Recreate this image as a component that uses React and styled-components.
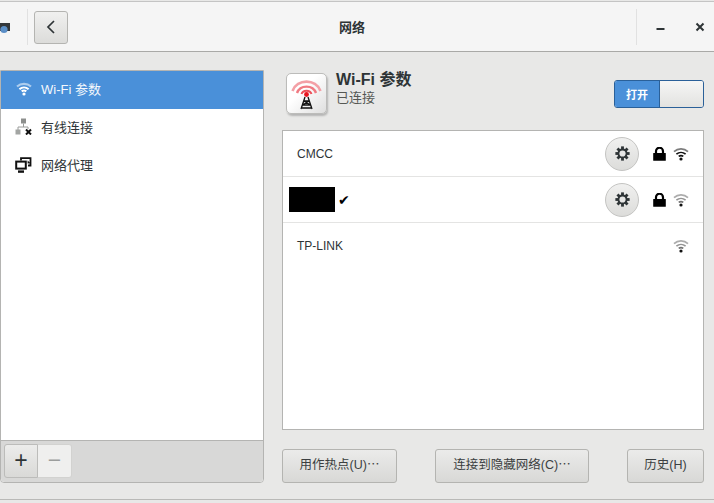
import React from 'react'
import styled, { createGlobalStyle } from 'styled-components'

const GlobalStyle = createGlobalStyle`
  html, body {
    margin: 0;
    padding: 0;
    background: #e8e8e7;
  }
  body {
    font-family: 'Liberation Sans', 'Noto Sans CJK SC', sans-serif;
    color: #2e3436;
  }
`

const Window = styled.div`
  width: 714px;
  height: 503px;
  box-sizing: border-box;
  display: flex;
  flex-direction: column;
  overflow: hidden;
  padding-top: 1px;
  background: #e8e8e7;
`
const TitleBar = styled.header`
  height: 51px;
  box-sizing: border-box;
  flex: none;
  display: flex;
  align-items: center;
  background: #f5f5f5;
  border-top: 1px solid #c4c4c4;
  border-bottom: 1px solid #a9a9a7;
`
const AppIconSlot = styled.div`
  width: 28px;
  height: 36px;
  box-sizing: border-box;
  flex: none;
  display: flex;
  align-items: center;
  padding-top: 4px;
  overflow: hidden;
  border-right: 1px solid #e1e1e1;
`
const BackButton = styled.button`
  margin: 1px 0 0 6px;
  width: 34px;
  height: 33px;
  flex: none;
  padding: 0;
  display: flex;
  align-items: center;
  justify-content: center;
  border: 1px solid #b4b4b1;
  border-radius: 3px;
  background: linear-gradient(#f0f0ef, #dcdcda);
`
const Title = styled.h1`
  flex: 1;
  margin: 0;
  text-align: center;
  font-size: 13px;
  font-weight: 700;
  color: #2e3436;
`
const WindowControls = styled.div`
  width: 78px;
  height: 36px;
  box-sizing: border-box;
  flex: none;
  display: flex;
  align-items: center;
  padding-left: 19px;
  gap: 30px;
  border-left: 1px solid #e1e1e1;
`
const Content = styled.div`
  flex: 1;
  display: flex;
  align-items: stretch;
  gap: 18px;
  padding: 18px 10px 18px 0;
  min-height: 0;
`
const Sidebar = styled.aside`
  width: 264px;
  height: 413px;
  box-sizing: border-box;
  flex: none;
  display: flex;
  flex-direction: column;
  background: #fff;
  border: 1px solid #b4b4b2;
  border-radius: 0 0 4px 4px;
`
const SideList = styled.div`
  flex: 1;
`
const SideRow = styled.div`
  height: 38px;
  box-sizing: border-box;
  display: flex;
  align-items: center;
  padding: 0 0 3px 14px;
  gap: 9px;
  font-size: 13px;
  background: ${p => (p.$active ? '#4a90d9' : 'transparent')};
  color: ${p => (p.$active ? '#f4f8fc' : '#2e3436')};
`
const SideIcon = styled.span`
  width: 17px;
  height: 17px;
  display: flex;
  align-items: center;
  justify-content: center;
  flex: none;
`
const SideFooter = styled.div`
  height: 42px;
  box-sizing: border-box;
  flex: none;
  display: flex;
  padding: 3px;
  background: #d8d8d7;
  border-top: 1px solid #b4b4b2;
  border-radius: 0 0 4px 4px;
`
const FooterButton = styled.button`
  height: 34px;
  width: 34px;
  padding: 0 0 2px;
  border: 1px solid ${p => (p.$dim ? '#d2d2d0' : '#bcbcba')};
  border-left-width: ${p => (p.$dim ? 0 : 1)}px;
  border-radius: ${p => (p.$dim ? '0 3px 3px 0' : '3px 0 0 3px')};
  background: ${p => (p.$dim ? '#efefee' : 'linear-gradient(#ececeb, #d9d9d7)')};
  color: ${p => (p.$dim ? '#9b9d9c' : '#2e3436')};
  font-family: 'Liberation Sans', sans-serif;
  font-size: 23px;
  font-weight: 400;
  line-height: 1;
`
const Main = styled.main`
  flex: 1;
  display: flex;
  flex-direction: column;
  min-width: 0;
  height: 413px;
`
const NetHeader = styled.div`
  height: 60px;
  box-sizing: border-box;
  flex: none;
  display: flex;
  align-items: flex-start;
  padding: 1px 0 0 4px;
  gap: 9px;
`
const TowerTile = styled.div`
  width: 41px;
  height: 41px;
  margin-top: 2px;
  box-sizing: border-box;
  flex: none;
  border: 1px solid #bcbcba;
  border-radius: 5px;
  background: linear-gradient(135deg, #fff 40%, #dedede);
  box-shadow: 1px 2px 2px rgba(0, 0, 0, 0.22);
  display: flex;
  align-items: center;
  justify-content: center;
`
const NetText = styled.div`
  flex: 1;
  display: flex;
  flex-direction: column;
`
const NetTitle = styled.div`
  font-size: 16px;
  font-weight: 700;
  line-height: 18px;
  color: #2e3436;
`
const NetStatus = styled.div`
  font-size: 13px;
  line-height: 18px;
  color: #555753;
`
const Toggle = styled.div`
  width: 90px;
  height: 28px;
  box-sizing: border-box;
  margin-top: 9px;
  flex: none;
  display: flex;
  border: 1px solid #2a6099;
  border-radius: 3px;
  overflow: hidden;
`
const ToggleOn = styled.span`
  width: 44px;
  background: #4a90d9;
  color: #fff;
  font-size: 11px;
  font-weight: 700;
  display: flex;
  align-items: center;
  justify-content: center;
  border-right: 1px solid #2a6099;
`
const ToggleKnob = styled.span`
  flex: 1;
  background: linear-gradient(#f6f6f5, #e2e2e0);
`
const NetList = styled.section`
  height: 300px;
  box-sizing: border-box;
  flex: none;
  background: #fff;
  border: 1px solid #b4b4b2;
`
const NetRow = styled.div`
  height: 46px;
  box-sizing: border-box;
  display: flex;
  align-items: center;
  padding: 0 14px 0 14px;
  font-size: 12px;
  color: #2e3436;
  border-bottom: ${p => (p.$last ? 'none' : '1px solid #e4e4e3')};
`
const NetName = styled.div`
  flex: 1;
  display: flex;
  align-items: center;
  gap: 3px;
`
const Redacted = styled.span`
  width: 46px;
  height: 25px;
  margin-left: -8px;
  background: #000;
`
const CheckMark = styled.span`
  font-family: 'DejaVu Sans', sans-serif;
  font-size: 14px;
  line-height: 1;
  color: #000;
`
const GearButton = styled.button`
  width: 34px;
  height: 34px;
  padding: 0;
  flex: none;
  display: flex;
  align-items: center;
  justify-content: center;
  border: 1px solid #c4c4c2;
  border-radius: 50%;
  background: linear-gradient(#f0f0ef, #dcdcda);
`
const LockSlot = styled.span`
  width: 13px;
  margin-left: 14px;
  display: flex;
  flex: none;
`
const WifiSlot = styled.span`
  width: 16px;
  margin-left: 7px;
  display: flex;
  flex: none;
`
const Actions = styled.div`
  flex: 1;
  display: flex;
  align-items: flex-end;
  justify-content: space-between;
`
const ActionButton = styled.button`
  height: 34px;
  width: ${p => p.$w}px;
  padding: 0 0 5px;
  border: 1px solid #b4b4b1;
  border-radius: 3px;
  background: linear-gradient(#ebebea, #d8d8d6);
  color: #3b3f41;
  font-family: 'Liberation Sans', 'Noto Sans CJK SC', sans-serif;
  font-size: 12.5px;
`
const BottomEdge = styled.div`
  height: 3px;
  flex: none;
  border-top: 1px solid #b9b9b7;
`

function WifiIcon({ color = '#2e3436', faded = false, weight = 1.7 }) {
  return (
    <svg width="16" height="14" viewBox="0 0 16 14" fill="none" stroke={color} strokeWidth={weight}>
      <path d="M1 4.600C5 .9 11 .9 15 4.600" opacity={faded ? 0.35 : 0.55} />
      <path d="M3.400 7.200C6.100 4.900 9.900 4.900 12.600 7.200" opacity={faded ? 0.45 : 1} />
      <path d="M5.700 9.400C7 8.400 9 8.400 10.300 9.400" opacity={faded ? 0.6 : 1} />
      <circle cx="8" cy="12" r="1.600" fill={color} stroke="none" />
    </svg>
  )
}

function LockIcon() {
  return (
    <svg width="13" height="14" viewBox="0 0 13 14">
      <path d="M3 6.500V4.200a3.500 3.500 0 0 1 7 0V6.500" fill="none" stroke="#000" strokeWidth="2.200" />
      <rect x="0.200" y="6" width="12.600" height="7.800" rx="0.500" fill="#000" />
    </svg>
  )
}

function GearIcon() {
  const teeth = [0, 45, 90, 135]
  return (
    <svg width="15" height="15" viewBox="0 0 16 16">
      {teeth.map(a => (
        <rect key={a} x="6.500" y="0.400" width="3" height="15.200" fill="#2e3436" transform={`rotate(${a} 8 8)`} />
      ))}
      <circle cx="8" cy="8" r="5.300" fill="#2e3436" />
      <circle cx="8" cy="8" r="3.300" fill="#e6e6e5" />
    </svg>
  )
}

function WiredIcon() {
  return (
    <svg width="17" height="17" viewBox="0 0 17 17">
      <rect x="6" y="0.500" width="5" height="5" fill="#8d8f8d" />
      <path d="M8.500 5.500V9M3 12V9H13V11" fill="none" stroke="#9a9c9a" />
      <rect x="0.500" y="11.500" width="5" height="5" fill="#a3a5a3" />
      <path d="M11 11.500L16 16.500M16 11.500L11 16.500" stroke="#111" strokeWidth="2" />
    </svg>
  )
}

function ProxyIcon() {
  return (
    <svg width="17" height="16" viewBox="0 0 17 16" fill="none">
      <path d="M6 3.500V1.200H15.500V8.500H13" stroke="#111" strokeWidth="1.800" />
      <rect x="1.200" y="4.600" width="9.600" height="7" stroke="#111" strokeWidth="2" />
      <path d="M3 14.600H9" stroke="#111" strokeWidth="2.400" />
      <path d="M12.600 6.600V3.600L15.600 6.200" fill="#111" />
    </svg>
  )
}

function TowerIcon() {
  return (
    <svg width="35" height="35" viewBox="0 0 35 35" fill="none">
      <path d="M3.500 15C8 2.500 27 2.500 31.500 15" stroke="#f3a0a6" strokeWidth="2.600" />
      <path d="M8 17C11 8.500 24 8.500 27 17" stroke="#f07a82" strokeWidth="2.400" />
      <path d="M12.500 18C14 13.500 21 13.500 22.500 18" stroke="#ec4f58" strokeWidth="2" />
      <circle cx="17.500" cy="18.500" r="2.400" fill="#e8141e" />
      <path d="M16 21L12 33M19 21L23 33M14.800 25H20.200M13.500 29H21.500M14.800 25L21.500 29M20.200 25L13.500 29M13 32L22 32" stroke="#111" strokeWidth="1.300" />
    </svg>
  )
}

function AppIcon() {
  return (
    <svg width="11" height="12" viewBox="0 0 11 12">
      <rect x="0" y="0" width="10" height="8" fill="#33373a" />
      <circle cx="4" cy="6.500" r="3.600" fill="#5b8fc7" />
    </svg>
  )
}

function BackChevron() {
  return (
    <svg width="12" height="16" viewBox="0 0 12 16" fill="none">
      <path d="M9 2L3 8L9 14" stroke="#2e3436" strokeWidth="1.700" />
    </svg>
  )
}

function MinimizeIcon() {
  return (
    <svg width="9" height="9" viewBox="0 0 9 9">
      <rect x="0.500" y="6" width="8" height="2" fill="#2e3436" />
    </svg>
  )
}

function CloseIcon() {
  return (
    <svg width="10" height="10" viewBox="0 0 10 10">
      <path d="M1.500 1.500L8.500 8.500M8.500 1.500L1.500 8.500" stroke="#2e3436" strokeWidth="2" />
    </svg>
  )
}

function App() {
  return (
    <Window>
      <GlobalStyle />
      <TitleBar>
        <AppIconSlot><AppIcon /></AppIconSlot>
        <BackButton><BackChevron /></BackButton>
        <Title>网络</Title>
        <WindowControls>
          <MinimizeIcon />
          <CloseIcon />
        </WindowControls>
      </TitleBar>
      <Content>
        <Sidebar>
          <SideList>
            <SideRow $active>
              <SideIcon><WifiIcon color="#fff" weight={2.1} /></SideIcon>
              Wi-Fi 参数
            </SideRow>
            <SideRow>
              <SideIcon><WiredIcon /></SideIcon>
              有线连接
            </SideRow>
            <SideRow>
              <SideIcon><ProxyIcon /></SideIcon>
              网络代理
            </SideRow>
          </SideList>
          <SideFooter>
            <FooterButton>+</FooterButton>
            <FooterButton $dim>−</FooterButton>
          </SideFooter>
        </Sidebar>
        <Main>
          <NetHeader>
            <TowerTile><TowerIcon /></TowerTile>
            <NetText>
              <NetTitle>Wi-Fi 参数</NetTitle>
              <NetStatus>已连接</NetStatus>
            </NetText>
            <Toggle>
              <ToggleOn>打开</ToggleOn>
              <ToggleKnob />
            </Toggle>
          </NetHeader>
          <NetList>
            <NetRow>
              <NetName>CMCC</NetName>
              <GearButton><GearIcon /></GearButton>
              <LockSlot><LockIcon /></LockSlot>
              <WifiSlot><WifiIcon color="#111" /></WifiSlot>
            </NetRow>
            <NetRow>
              <NetName>
                <Redacted />
                <CheckMark>✔</CheckMark>
              </NetName>
              <GearButton><GearIcon /></GearButton>
              <LockSlot><LockIcon /></LockSlot>
              <WifiSlot><WifiIcon color="#111" faded /></WifiSlot>
            </NetRow>
            <NetRow $last>
              <NetName>TP-LINK</NetName>
              <WifiSlot><WifiIcon color="#111" faded /></WifiSlot>
            </NetRow>
          </NetList>
          <Actions>
            <ActionButton $w={115}>用作热点(U)⋯</ActionButton>
            <ActionButton $w={154}>连接到隐藏网络(C)⋯</ActionButton>
            <ActionButton $w={77}>历史(H)</ActionButton>
          </Actions>
        </Main>
      </Content>
      <BottomEdge />
    </Window>
  )
}

export default App
